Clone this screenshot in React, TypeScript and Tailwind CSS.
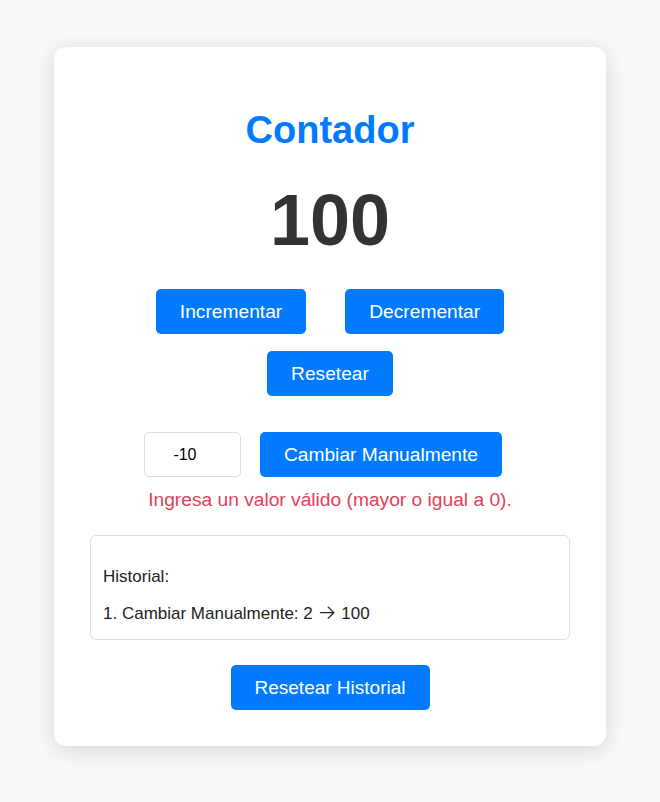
import React, { useState } from "react";

const btn =
    "rounded-[5px] bg-[#007bff] px-6 h-[45px] text-white leading-[22px] font-['Liberation_Sans',Arial,sans-serif]";

const App = () => {
    const [count] = useState(100);
    const [value, setValue] = useState("-10");

    return (
        <div className="min-h-[802px] w-full bg-[#f7f8fa] pt-[47px] font-['Liberation_Sans',Arial,sans-serif]">
            <div className="mx-auto flex w-[552px] flex-col items-center rounded-[12px] bg-white px-9 pt-[61px] pb-[36px] shadow-[0_4px_20px_rgba(0,0,0,0.13)]">
                <h1 className="text-[38px] leading-[44px] font-bold text-[#007bff]">Contador</h1>

                <div className="mt-[27px] text-[72px] leading-[83px] font-bold text-[#333]">
                    {count}
                </div>

                <div className="mt-[27px] flex gap-[39px]">
                    <button className={`${btn} text-[19.2px]`}>Incrementar</button>
                    <button className={`${btn} text-[19.2px]`}>Decrementar</button>
                </div>
                <div className="mt-[17px] flex">
                    <button className={`${btn} text-[19.2px]`}>Resetear</button>
                </div>

                <div className="mt-[36px] flex gap-[19px] pr-[14px]">
                    <input
                        type="text"
                        value={value}
                        onChange={(e) => setValue(e.target.value)}
                        className="h-[45px] w-[97px] rounded-[5px] border border-[#ddd] pr-[15px] text-center text-[16px] text-black outline-none"
                    />
                    <button className={`${btn} text-[19.2px]`}>Cambiar Manualmente</button>
                </div>

                <p className="mt-[12px] text-[19.2px] leading-[22px] text-[#e4405a]">
                    Ingresa un valor válido (mayor o igual a 0).
                </p>

                <div className="mt-[24px] flex h-[105px] w-full flex-col gap-[15px] rounded-[6px] border border-[#ddd] px-[12px] pt-[31px] text-[17px] leading-[20px] text-[#222]">
                    <p>Historial:</p>
                    <p>
                        1. Cambiar Manualmente: 2{" "}
                        <span className="font-['Inter',sans-serif] text-[20px] font-light">→</span> 100
                    </p>
                </div>

                <button className={`${btn} mt-[25px] text-[19px]`}>Resetear Historial</button>
            </div>
        </div>
    );
};

export default App;
